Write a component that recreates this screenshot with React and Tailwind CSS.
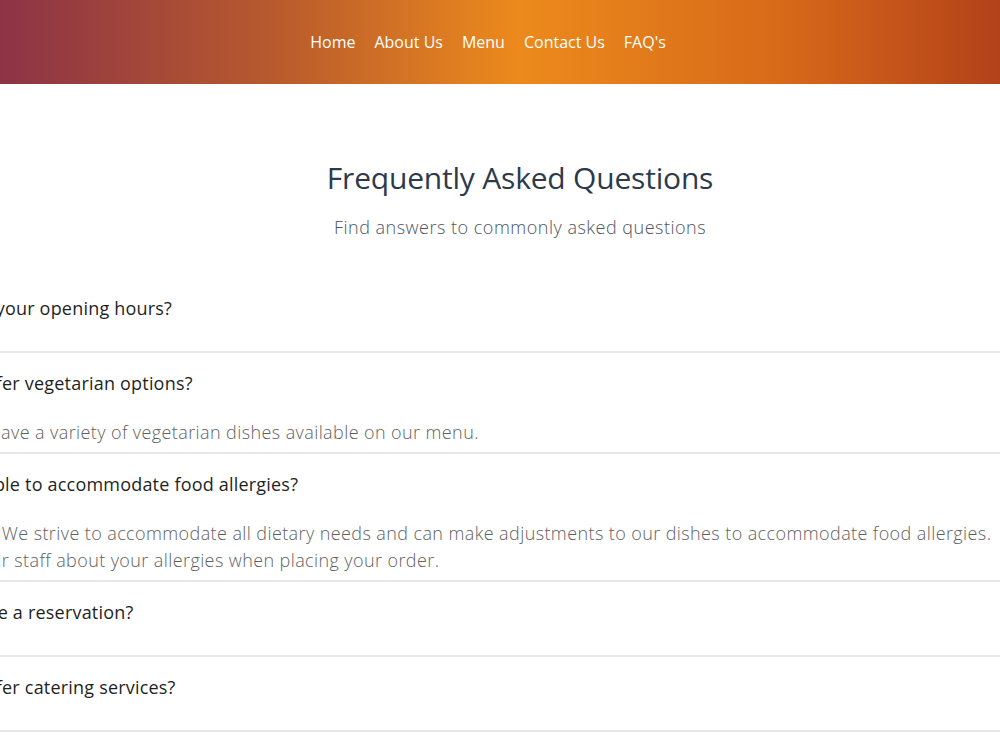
import React from "react";

const faqs = [
  { q: "What are your opening hours?", a: [] },
  { q: "Do you offer vegetarian options?", a: ["Sure, we have a variety of vegetarian dishes available on our menu."] },
  {
    q: "Are you able to accommodate food allergies?",
    a: [
      "Definitely! We strive to accommodate all dietary needs and can make adjustments to our dishes to accommodate food allergies.",
      "Just tell our staff about your allergies when placing your order.",
    ],
  },
  { q: "Can I make a reservation?", a: [] },
  { q: "Do you offer catering services?", a: [] },
  { q: "Do you have parking available?", a: [] },
];

export default function App() {
  return (
    <div className="w-[1000px] h-[750px] overflow-hidden bg-white font-['Open_Sans',sans-serif]">
      <header className="h-[84px] flex items-center justify-center pr-[24px] bg-[linear-gradient(90deg,#8c3346_0%,#b95b2d_28%,#ec8a1c_52%,#d76a19_78%,#b3411a_100%)]">
        <nav className="flex items-center gap-[19px] text-white text-[16px] font-medium">
          <span>Home</span>
          <span>About Us</span>
          <span>Menu</span>
          <span>Contact Us</span>
          <span>FAQ's</span>
        </nav>
      </header>

      <section className="flex flex-col items-center pl-[40px] pt-[72px]">
        <h1 className="text-[30px] leading-[44px] text-[#2d3a4b] font-normal tracking-[-0.2px]">
          Frequently Asked Questions
        </h1>
        <p className="mt-[14px] text-[18px] leading-[26px] text-[#4d5562] font-light tracking-[0.5px]">
          Find answers to commonly asked questions
        </p>
      </section>

      <div className="mt-[38px] ml-[-87px] w-[1200px] flex flex-col">
        {faqs.map((f, i) => (
          <div key={i} className="border-b-2 border-[#e8e8e8] pt-[17px] pb-[30px]">
            <div className="h-[26px] leading-[26px] text-[18px] font-medium text-[#1f1f1f] tracking-[0.2px]">
              {f.q}
            </div>
            {f.a.length > 0 && (
              <div className="mt-[23px] -mb-[24px] text-[18px] leading-[27px] font-light text-[#5f5f5f] tracking-[0.4px] whitespace-nowrap">
                {f.a.map((l, j) => (
                  <div key={j}>{l}</div>
                ))}
              </div>
            )}
          </div>
        ))}
      </div>
    </div>
  );
}
